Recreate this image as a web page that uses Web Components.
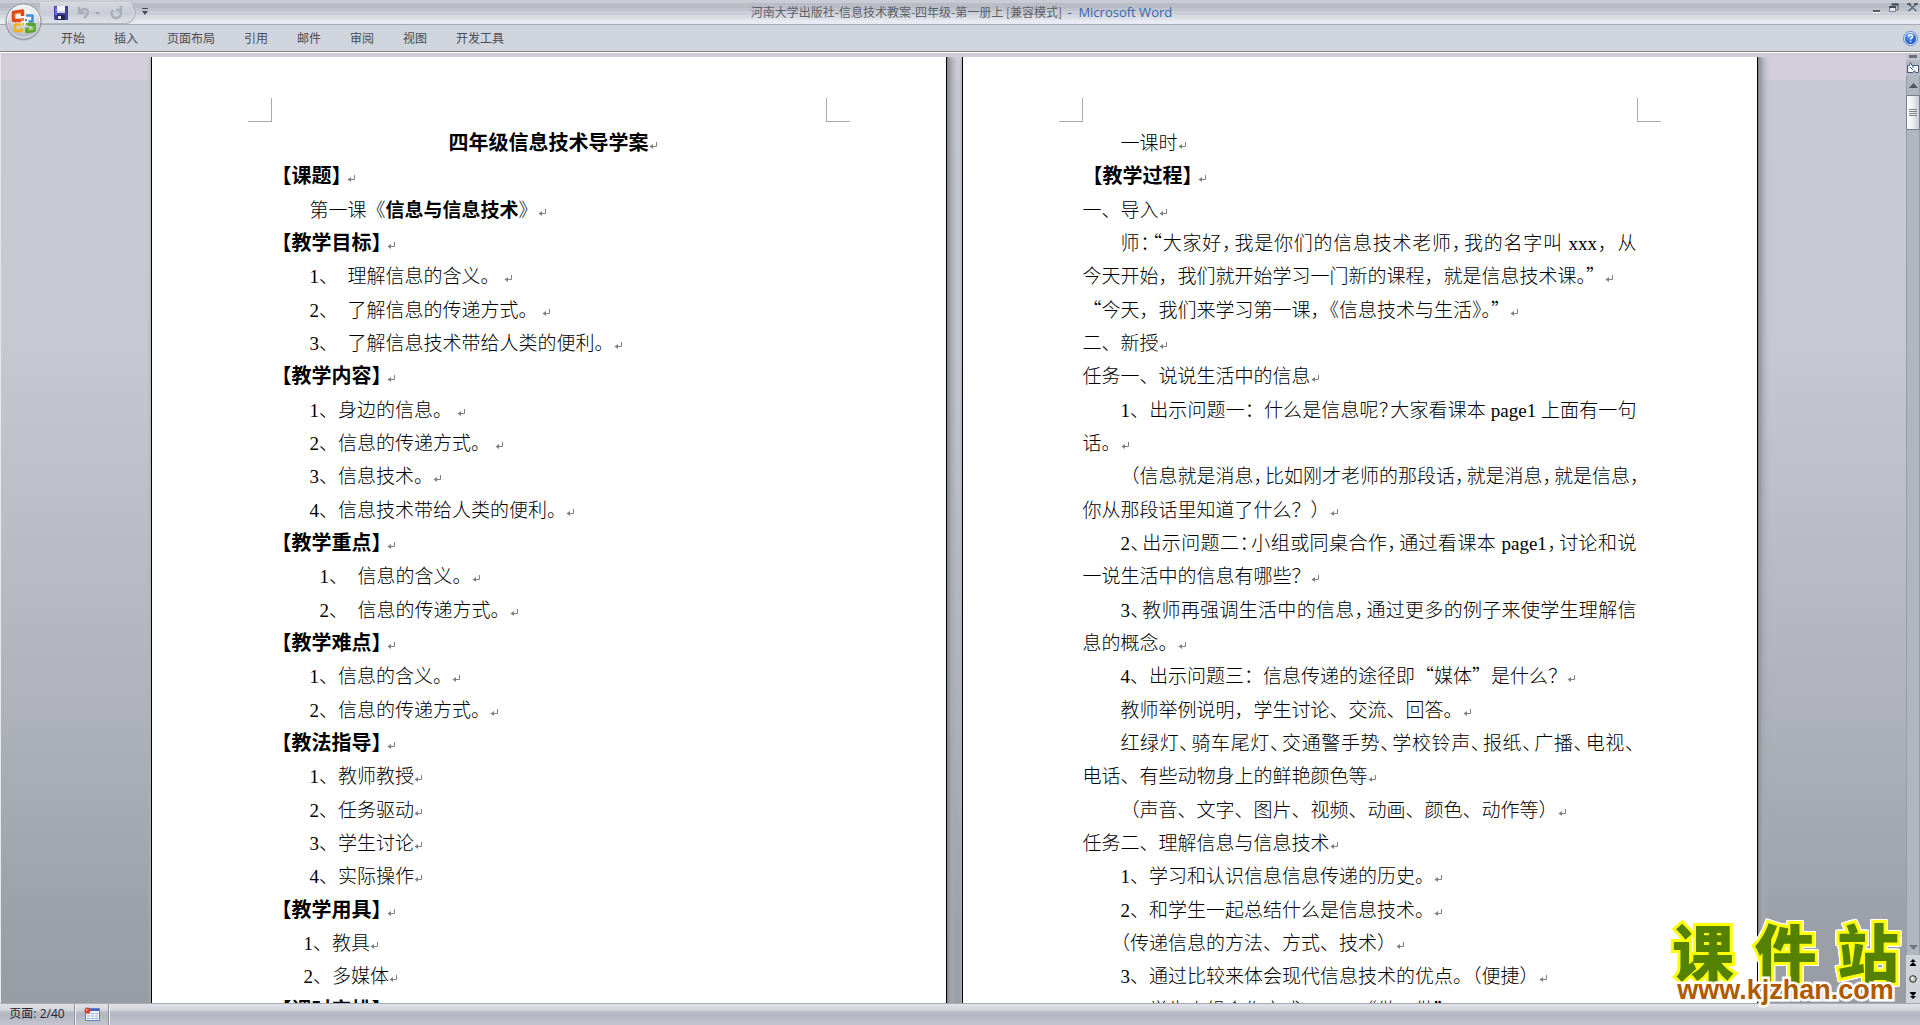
<!DOCTYPE html>
<html lang="zh-CN">
<head>
<meta charset="utf-8">
<title>河南大学出版社-信息技术教案-四年级-第一册上 - Microsoft Word</title>
<style>
html, body { margin: 0; height: 100%; overflow: hidden; }
body { font-family: "Noto Sans CJK SC", sans-serif; }
</style>
</head>
<body>
<word-app>
  <word-titlebar slot="top"></word-titlebar>
  <word-ribbon slot="top"></word-ribbon>

  <doc-page>
    <doc-line kind="title" mark>四年级信息技术导学案</doc-line>
    <doc-line kind="head" mark>【课题】</doc-line>
    <doc-line indent="a" mark>第一课《<b>信息与信息技术</b>》</doc-line>
    <doc-line kind="head" mark>【教学目标】</doc-line>
    <doc-line indent="a" mark>1、&nbsp; 理解信息的含义。&nbsp;</doc-line>
    <doc-line indent="a" mark>2、&nbsp; 了解信息的传递方式。&nbsp;</doc-line>
    <doc-line indent="a" mark>3、&nbsp; 了解信息技术带给人类的便利。</doc-line>
    <doc-line kind="head" mark>【教学内容】</doc-line>
    <doc-line indent="a" mark>1、身边的信息。&nbsp;</doc-line>
    <doc-line indent="a" mark>2、信息的传递方式。&nbsp;</doc-line>
    <doc-line indent="a" mark>3、信息技术。</doc-line>
    <doc-line indent="a" mark>4、信息技术带给人类的便利。</doc-line>
    <doc-line kind="head" mark>【教学重点】</doc-line>
    <doc-line indent="b" mark>1、&nbsp; 信息的含义。</doc-line>
    <doc-line indent="b" mark>2、&nbsp; 信息的传递方式。</doc-line>
    <doc-line kind="head" mark>【教学难点】</doc-line>
    <doc-line indent="a" mark>1、信息的含义。</doc-line>
    <doc-line indent="a" mark>2、信息的传递方式。</doc-line>
    <doc-line kind="head" mark>【教法指导】</doc-line>
    <doc-line indent="a" mark>1、教师教授</doc-line>
    <doc-line indent="a" mark>2、任务驱动</doc-line>
    <doc-line indent="a" mark>3、学生讨论</doc-line>
    <doc-line indent="a" mark>4、实际操作</doc-line>
    <doc-line kind="head" mark>【教学用具】</doc-line>
    <doc-line indent="c" mark>1、教具</doc-line>
    <doc-line indent="c" mark>2、多媒体</doc-line>
    <doc-line kind="head" mark>【课时安排】</doc-line>
  </doc-page>

  <doc-page>
    <doc-line indent="a" mark>一课时</doc-line>
    <doc-line kind="head" mark>【教学过程】</doc-line>
    <doc-line mark>一、导入</doc-line>
    <doc-line indent="a" justify>师<i>：</i><span>“</span>大家好<i>，</i>我是你们的信息技术老师<i>，</i>我的名字叫 xxx，从</doc-line>
    <doc-line mark>今天开始，我们就开始学习一门新的课程，就是信息技术课<span>。”</span></doc-line>
    <doc-line mark><span>“今天，我们来学习第一课，《信息技术与生活》。”</span></doc-line>
    <doc-line mark>二、新授</doc-line>
    <doc-line mark>任务一、说说生活中的信息</doc-line>
    <doc-line indent="a" justify>1、出示问题一：什么是信息呢<i>？</i>大家看课本 page1 上面有一句</doc-line>
    <doc-line mark>话。</doc-line>
    <doc-line indent="a" justify>（信息就是消息<i>，</i>比如刚才老师的那段话<i>，</i>就是消息<i>，</i>就是信息<i>，</i></doc-line>
    <doc-line mark>你从那段话里知道了什么？）</doc-line>
    <doc-line indent="a" justify>2<i>、</i>出示问题二<i>：</i>小组或同桌合作<i>，</i>通过看课本 page1<i>，</i>讨论和说</doc-line>
    <doc-line mark>一说生活中的信息有哪些？</doc-line>
    <doc-line indent="a" justify>3<i>、</i>教师再强调生活中的信息<i>，</i>通过更多的例子来使学生理解信</doc-line>
    <doc-line mark>息的概念。</doc-line>
    <doc-line indent="a" mark>4、出示问题三：信息传递的途径即<span>“媒体”</span>是什么？</doc-line>
    <doc-line indent="a" mark>教师举例说明，学生讨论、交流、回答。</doc-line>
    <doc-line indent="a" justify>红绿灯<i>、</i>骑车尾灯<i>、</i>交通警手势<i>、</i>学校铃声<i>、</i>报纸<i>、</i>广播<i>、</i>电视<i>、</i></doc-line>
    <doc-line mark>电话、有些动物身上的鲜艳颜色等</doc-line>
    <doc-line indent="a" mark>（声音、文字、图片、视频、动画、颜色、动作等）</doc-line>
    <doc-line mark>任务二、理解信息与信息技术</doc-line>
    <doc-line indent="a" mark>1、学习和认识信息信息传递的历史。</doc-line>
    <doc-line indent="a" mark>2、和学生一起总结什么是信息技术。</doc-line>
    <doc-line indent="a" mark><em>（</em>传递信息的方法、方式、技术）</doc-line>
    <doc-line indent="a" mark>3、通过比较来体会现代信息技术的优点。（便捷）</doc-line>
    <doc-line indent="a" mark>4、学生小组合作方式一——<span>“做一做”</span></doc-line>
  </doc-page>

  <word-scrollbar slot="scroll"></word-scrollbar>
  <word-status slot="bottom"></word-status>
  <site-badge slot="badge"></site-badge>
</word-app>

<script>
class Base extends HTMLElement {
  connectedCallback() {
    if (this.shadowRoot) return;
    this.attachShadow({ mode: 'open' }).innerHTML = this.constructor.html;
  }
}
const button = 'button{appearance:none;border:0;margin:0;padding:0;background:none;font:inherit;color:inherit;cursor:default;display:flex;align-items:center;justify-content:center}svg{display:block}';

customElements.define('word-app', class extends Base {
  static html = `<style>
    :host{display:flex;flex-direction:column;height:100vh;position:relative;background:#d0d4dc;box-sizing:border-box}
    .middle{flex:1;min-height:0;display:flex;overflow:hidden;border-left:1px solid #e6e8ee}
    .work{flex:1;min-width:0;display:flex;flex-direction:column;
      background:linear-gradient(#d2cfda 0 28px,#c8cad3 28px,#c6c9d2 30%,#b0b3bc 68%,#9ba0a9 92%,#979ca5)}
    .rim{flex:none;height:5px;background:#d0cdd8}
    .desk{flex:1;min-height:0;display:flex;justify-content:center;gap:15px;padding-left:1px;overflow:hidden}
  </style>
  <slot name="top"></slot>
  <div class="middle"><main class="work"><div class="rim"></div><div class="desk"><slot></slot></div></main><slot name="scroll"></slot></div>
  <slot name="bottom"></slot><slot name="badge"></slot>`;
});

customElements.define('word-titlebar', class extends Base {
  static html = `<style>${button}
    :host{display:flex;align-items:flex-start;height:24px;border-bottom:1px solid #a7a9b3;position:relative;
      background:linear-gradient(#c9ccd4 0 3px,#b9bcc5 3px 8px,#c0c3cc 8px 11px,#cbced6 11px 15px,#d7dae0 15px 18px,#dfe1e6 18px 20px,#e7eaf3 20px)}
    .quick{display:flex;align-items:center;height:20px;margin:2px 0 0 40px;padding:0 14px 0 14px;gap:9px;width:67px;
      border:1px solid #b3b6c0;border-left:0;border-top-color:#d8dae1;border-radius:0 11px 11px 0;background:linear-gradient(#d5d7df,#c9ccd5 50%,#dfe1e8)}
    .more{margin:8px 0 0 5px;width:8px}
    h1{flex:1;margin:0;font-size:12px;font-weight:400;line-height:24px;text-align:center;color:#5b606b;white-space:nowrap;padding-right:98px}
    h1 span{font:13px/24px "Open Sans",sans-serif;color:#3568b0}
    .win{display:flex;gap:8px;margin:3px 2px 0 0}
    .orb{position:absolute;left:4px;top:2px;z-index:2}
  </style>
  <div class="quick">
    <button aria-label="保存"><svg width="14" height="14" viewBox="0 0 14 14"><path d="M0 0h14v14H1l-1-1z" fill="#3f3f9f"/><path d="M1 1h2v8H1z" fill="#6d70d6"/><path d="M3 0h8v7H3z" fill="#f2f4fb"/><path d="M3 5h8v2H3z" fill="#cfd4ea"/><path d="M3 9h8v5H3z" fill="#22264f"/><path d="M4 10h3v3H4z" fill="#e8ebf5"/></svg></button>
    <button aria-label="撤消"><svg width="24" height="14" viewBox="0 0 24 14"><path d="M2 1v6h6M3 6c2-4 8-4 8 0 0 3-2 4-4 6" fill="none" stroke="#a9adba" stroke-width="2.4"/><path d="M18 6h5l-2.500 3z" fill="#9ca0ac"/></svg></button>
    <button aria-label="重复"><svg width="13" height="14" viewBox="0 0 13 14"><path d="M3 4C0 7 2 12 6 12s7-4 3-8M6 4h5V0" fill="none" stroke="#a9adba" stroke-width="2.400"/></svg></button>
  </div>
  <button class="more" aria-label="自定义快速访问工具栏"><svg width="6" height="7" viewBox="0 0 6 7"><path d="M0 0h6v1H0zM0 3h6L3 7z" fill="#4a4e58"/></svg></button>
  <h1>河南大学出版社-信息技术教案-四年级-第一册上 [兼容模式] &nbsp;<span>-&nbsp; Microsoft Word</span></h1>
  <div class="win">
    <button aria-label="最小化"><svg width="9" height="10" viewBox="0 0 9 10"><path d="M1 7h7v2H1z" fill="#555a64"/><path d="M1 9h7v1H1z" fill="#fff"/></svg></button>
    <button aria-label="还原"><svg width="10" height="10" viewBox="0 0 10 10"><path d="M3 1h6v6H7" fill="none" stroke="#5d6470"/><path d="M2.500 1.500h7" stroke="#454a55" stroke-width="2"/><path d="M.5 4.500h6v4h-6z" fill="#e8ebf3" stroke="#7080a0"/><path d="M0 4h7" stroke="#454a55" stroke-width="2"/></svg></button>
    <button aria-label="关闭"><svg width="11" height="10" viewBox="0 0 11 10"><path d="M1.500 1.500l8 8M9.500 1.500l-8 8" stroke="#fff" stroke-width="2"/><path d="M1.500 1l8 7.500M9.500 1l-8 7.500" stroke="#68778f" stroke-width="2.200"/><path d="M0 1h4M7 1h4" stroke="#454a55" stroke-width="1.500"/></svg></button>
  </div>
  <button class="orb" aria-label="Office 按钮"><svg width="39" height="39" viewBox="0 0 39 39">
    <defs><radialGradient id="o" cx=".5" cy=".3" r=".75"><stop offset="0" stop-color="#fff"/><stop offset=".5" stop-color="#e2e4e9"/><stop offset=".8" stop-color="#b9bdc6"/><stop offset="1" stop-color="#f4f5f8"/></radialGradient></defs>
    <circle cx="19.500" cy="20.500" r="18" fill="#8f939d" opacity=".5"/><circle cx="19.500" cy="19.500" r="17.500" fill="url(#o)" stroke="#8d919c"/><circle cx="19.500" cy="19.500" r="16.300" fill="none" stroke="#fff" opacity=".8"/>
    <path d="M2.500 19.500c8 4 26 4 34 0 0 22-34 22-34 0z" fill="#b7bbc5" opacity=".45"/>
    <g fill="none" stroke-linejoin="round">
      <path d="M17 18.500H9.500V10.500l9-1.500v5" stroke="#dc4a14" stroke-width="3.600"/>
      <path d="M11 16v-4l6-1" stroke="#f59a4a"/>
      <path d="M22 13.500h6.500v6h-4" stroke="#3f8fd8" stroke-width="2.600"/>
      <path d="M17 22.500h-6v6.500h6.500v-3" stroke="#f2b01c" stroke-width="2.600"/>
      <path d="M24 22.500h6v6l-7 1v-4" stroke="#58a52c" stroke-width="3.600"/>
      <path d="M29 24v3.500l-5 .7" stroke="#a4d66c"/>
    </g>
    <path d="M17 16h3v3h-3z" fill="#f08020"/><path d="M21 17h2v2h-2z" fill="#3f8fd8"/><path d="M18 21h2v2h-2z" fill="#f2b01c"/><path d="M22 21h2v2h-2z" fill="#58a52c"/></svg></button>`;
});

customElements.define('word-ribbon', class extends Base {
  static html = `<style>${button}
    :host{display:flex;align-items:center;justify-content:space-between;height:26px;border-bottom:1px solid #81858c;box-shadow:0 1px #fff;z-index:1;padding:0 2px 0 61px;
      background:#d0d4dc;font-size:12px;line-height:24px;color:#474c57}
    nav{display:flex;gap:29px}
  </style>
  <nav><button>开始</button><button>插入</button><button>页面布局</button><button>引用</button><button>邮件</button><button>审阅</button><button>视图</button><button>开发工具</button></nav>
  <button aria-label="帮助"><svg width="15" height="15" viewBox="0 0 15 15"><defs><radialGradient id="h" cx=".4" cy=".3" r=".8"><stop offset="0" stop-color="#6aa5f5"/><stop offset="1" stop-color="#0a3fc0"/></radialGradient></defs><circle cx="7.500" cy="7.500" r="7" fill="#dceafc" stroke="#5b86c8"/><circle cx="7.500" cy="7.500" r="5.600" fill="url(#h)"/><path d="M5.500 6c0-3 4-2.600 4-.4 0 1.500-2 1.400-2 3" fill="none" stroke="#fff" stroke-width="1.500"/><path d="M6.700 9.800h1.600v1.500H6.700z" fill="#fff"/></svg></button>`;
});

customElements.define('doc-page', class extends Base {
  static html = `<style>
    :host{display:block;box-sizing:border-box;flex:none;width:796px;min-height:1100px;background:#fff;border:solid #000;border-width:0 1px;padding:41px 120px 0;
      box-shadow:1px 0 #85888f,3px 0 2px #92959d,7px 0 5px #a6a9b2,-1px 0 3px #aeb1ba}
    .crop{display:flex;justify-content:space-between;margin:0 -24px 5px}
    .crop i{width:23px;height:23px;border:solid #a7a9b3;border-width:0 1px 1px 0}
    .crop i+i{border-width:0 0 1px 1px}
    .text{display:grid;grid-template-columns:minmax(0,1fr);grid-auto-rows:33px 34px 33px}
  </style><div class="crop"><i></i><i></i></div><div class="text"><slot></slot></div>`;
});

customElements.define('doc-line', class extends Base {
  static html = `<style>
    :host{display:block;font:300 19px/33px "Liberation Serif","Noto Sans CJK SC",serif;color:#000;white-space:nowrap}
    :host([indent=a]){padding-left:38px}
    :host([indent=b]){padding-left:48px}
    :host([indent=c]){padding-left:32px}
    :host([kind]){font-weight:700;font-size:20px}
    :host([kind=title]){text-align:center}
    :host([justify]){text-align-last:justify}
    ::slotted(b){font-weight:700}
    ::slotted(span){font-family:"Noto Sans CJK SC",serif;line-height:0}
    ::slotted(i),::slotted(em){font-style:normal;font-family:"Noto Sans CJK SC",serif;line-height:0;font-feature-settings:"halt"}
    ::slotted(i){margin-right:2px}
    svg{display:none;width:8px;height:8px;margin-right:-8px}
    :host([mark]) svg{display:inline}
    :host([kind=head]) svg{margin:0 -3px 0 -5px}
  </style><slot></slot><svg viewBox="0 0 8 8" aria-hidden="true"><path d="M7.500 0v4.500H2" fill="none" stroke="#808080"/><path d="M4 2v5L.5 4.500z" fill="#808080"/></svg>`;
});

customElements.define('word-scrollbar', class extends Base {
  static html = `<style>${button}
    :host{display:flex;flex-direction:column;align-items:center;width:14px;background:#c3c6ce;border-top:1px solid #e3e4ea;box-sizing:border-box;padding-top:2px}
    .split{width:8px;height:3px;background:#6c6f76;margin-bottom:2px}
    .ruler{width:14px;height:16px;background:#b5b9c3}
    .track{flex:1;align-self:stretch;display:flex;flex-direction:column;background:#b1b6be;border:solid #989ca6;border-width:0 1px}
    .up{height:19px}.down{height:15px}
    .thumb{height:35px;border:1px solid #7b7e86;border-radius:1px;box-sizing:border-box;margin:0 -1px;background:linear-gradient(90deg,#fff,#eceef3 50%,#c9ccd6)}
    .gap{flex:1}
    .nav{display:flex;flex-direction:column;align-items:center;justify-content:space-around;align-self:stretch;height:48px;background:#d0d3da}
  </style>
  <div class="split"></div>
  <button class="ruler" aria-label="标尺"><svg width="12" height="12" viewBox="0 0 12 12"><path d="M.5 3.500h2l1-3 1.500 3h6.500v7h-3l-1-2-1.500 2h-5.500z" fill="#f3f6fb" stroke="#45597e"/><path d="M3 5l3 3M6 3v3" stroke="#45597e"/></svg></button>
  <div class="track">
    <button class="up" aria-label="向上"><svg width="9" height="5" viewBox="0 0 9 5"><path d="M0 5h9L4.500 0z" fill="#4f545d"/></svg></button>
    <button class="thumb" aria-label="滚动块"><svg width="8" height="8" viewBox="0 0 8 8"><path d="M0 .5h8M0 2.500h8M0 4.500h8M0 6.500h8" stroke="#7b7e86"/></svg></button>
    <div class="gap"></div>
    <button class="down" aria-label="向下"><svg width="9" height="5" viewBox="0 0 9 5"><path d="M0 0h9L4.500 5z" fill="#70747d"/></svg></button>
  </div>
  <div class="nav">
    <button aria-label="前一页"><svg width="6" height="7" viewBox="0 0 6 7"><path d="M0 3h6L3 0zM0 6h6L3 3zM0 6h6v1H0z"/></svg></button>
    <button aria-label="选择浏览对象"><svg width="8" height="8" viewBox="0 0 8 8"><circle cx="4" cy="4" r="3.300" fill="#c9cbc6" stroke="#222"/><circle cx="3" cy="3" r="1.200" fill="#fff"/></svg></button>
    <button aria-label="下一页"><svg width="6" height="7" viewBox="0 0 6 7"><path d="M0 4h6L3 7zM0 1h6L3 4zM0 0h6v1H0z"/></svg></button>
  </div>`;
});

customElements.define('word-status', class extends Base {
  static html = `<style>${button}
    :host{display:flex;flex:none;height:21px;border-top:1px solid #a7a9b3;font:12px/18px "Open Sans","Noto Sans CJK SC",sans-serif;color:#23262c;
      background:linear-gradient(#dfe1e7 0,#d3d5dd 30%,#bdc0ca 36%,#b2b5bf 50%,#c3c6cf)}
    button{border-right:1px solid #8f929b;box-shadow:1px 0 #eceef2;padding-bottom:2px}
    .page{width:75px}
    .macro{width:34px}
  </style>
  <button class="page">页面: 2/40</button>
  <button class="macro" aria-label="录制宏"><svg width="16" height="14" viewBox="0 0 16 14"><path d="M1.500 1.500h14v12h-14z" fill="#f4f7fd" stroke="#5f7fc0"/><path d="M2 2h13v2H2z" fill="#3c66c4"/><path d="M3 6.500h3M7 6.500h3M11 6.500h3M3 9h3M7 9h3M11 9h3M3 11.500h3M7 11.500h3M11 11.500h3" stroke="#8aa6dc"/><circle cx="3.500" cy="3.500" r="3" fill="#d8452a"/><circle cx="2.700" cy="2.700" r="1" fill="#f6a58f"/></svg></button>`;
});

customElements.define('site-badge', class extends Base {
  static html = `<style>
    :host{position:absolute;right:21px;bottom:22px;width:227px;display:flex;flex-direction:column}
    strong{font:900 62px/54px "Noto Sans CJK SC",sans-serif;color:#548200;text-align-last:justify;-webkit-text-stroke:6px #ff0;paint-order:stroke fill;
      filter:drop-shadow(1px 0 #fff) drop-shadow(-1px 0 #fff) drop-shadow(0 1px #fff) drop-shadow(0 -1px #fff)}
    a{font:700 27px/26px "Liberation Sans",sans-serif;color:#b05a00;text-decoration:none;-webkit-text-stroke:5px #fff;paint-order:stroke fill;text-align:center;position:relative}
  </style><strong>课件站</strong><a href="#">www.kjzhan.com</a>`;
});
</script>
</body>
</html>
